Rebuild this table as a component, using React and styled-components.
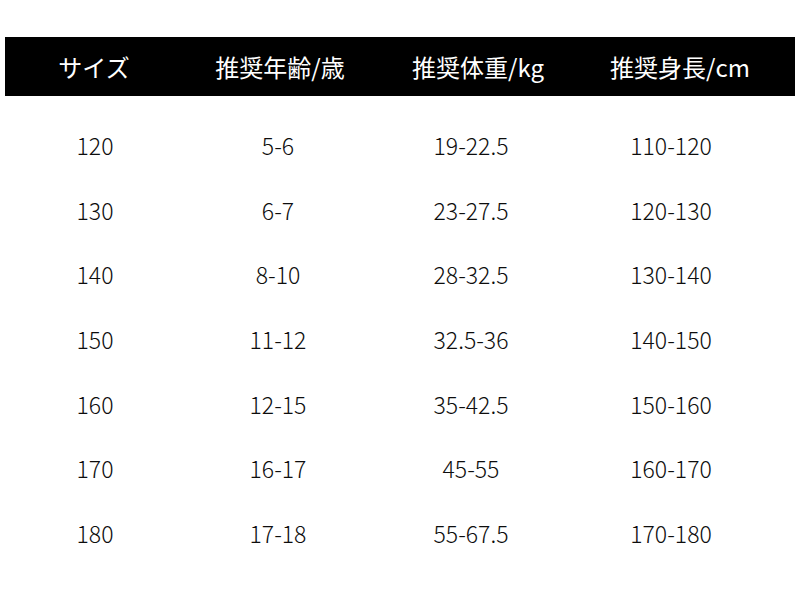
import React from "react";
import styled, { createGlobalStyle } from "styled-components";

const Global = createGlobalStyle`
  html, body { margin: 0; padding: 0; background: #fff; }
  body { font-family: "Noto Sans CJK JP", "Noto Sans", sans-serif; }
`;

const Page = styled.div`
  width: 800px;
  height: 598px;
  padding: 37px 5px 0 5px;
  box-sizing: border-box;
  background: #fff;
`;

const HeaderRow = styled.div`
  display: grid;
  grid-template-columns: 178px 194px 202px 202px 1fr;
  height: 59px;
  align-items: center;
  background: #000;
  color: #fff;
  font-size: 24px;
  font-weight: 400;
`;

const Body = styled.div`
  padding-top: 17px;
`;

const DataRow = styled.div`
  display: grid;
  grid-template-columns: 180px 186px 200px 200px 1fr;
  height: 64.6px;
  align-items: center;
  color: #0d0d0d;
  font-size: 23px;
  font-weight: 300;
`;

const Cell = styled.div`
  text-align: center;
  white-space: nowrap;
`;

const headers = ["サイズ", "推奨年齢/歳", "推奨体重/kg", "推奨身長/cm"];
const rows = [
  ["120", "5-6", "19-22.5", "110-120"],
  ["130", "6-7", "23-27.5", "120-130"],
  ["140", "8-10", "28-32.5", "130-140"],
  ["150", "11-12", "32.5-36", "140-150"],
  ["160", "12-15", "35-42.5", "150-160"],
  ["170", "16-17", "45-55", "160-170"],
  ["180", "17-18", "55-67.5", "170-180"],
];

export default function App() {
  return (
    <>
      <Global />
      <Page>
        <HeaderRow>
          {headers.map((h) => (
            <Cell key={h}>{h}</Cell>
          ))}
        </HeaderRow>
        <Body>
          {rows.map((r) => (
            <DataRow key={r[0]}>
              {r.map((c, i) => (
                <Cell key={i}>{c}</Cell>
              ))}
            </DataRow>
          ))}
        </Body>
      </Page>
    </>
  );
}
